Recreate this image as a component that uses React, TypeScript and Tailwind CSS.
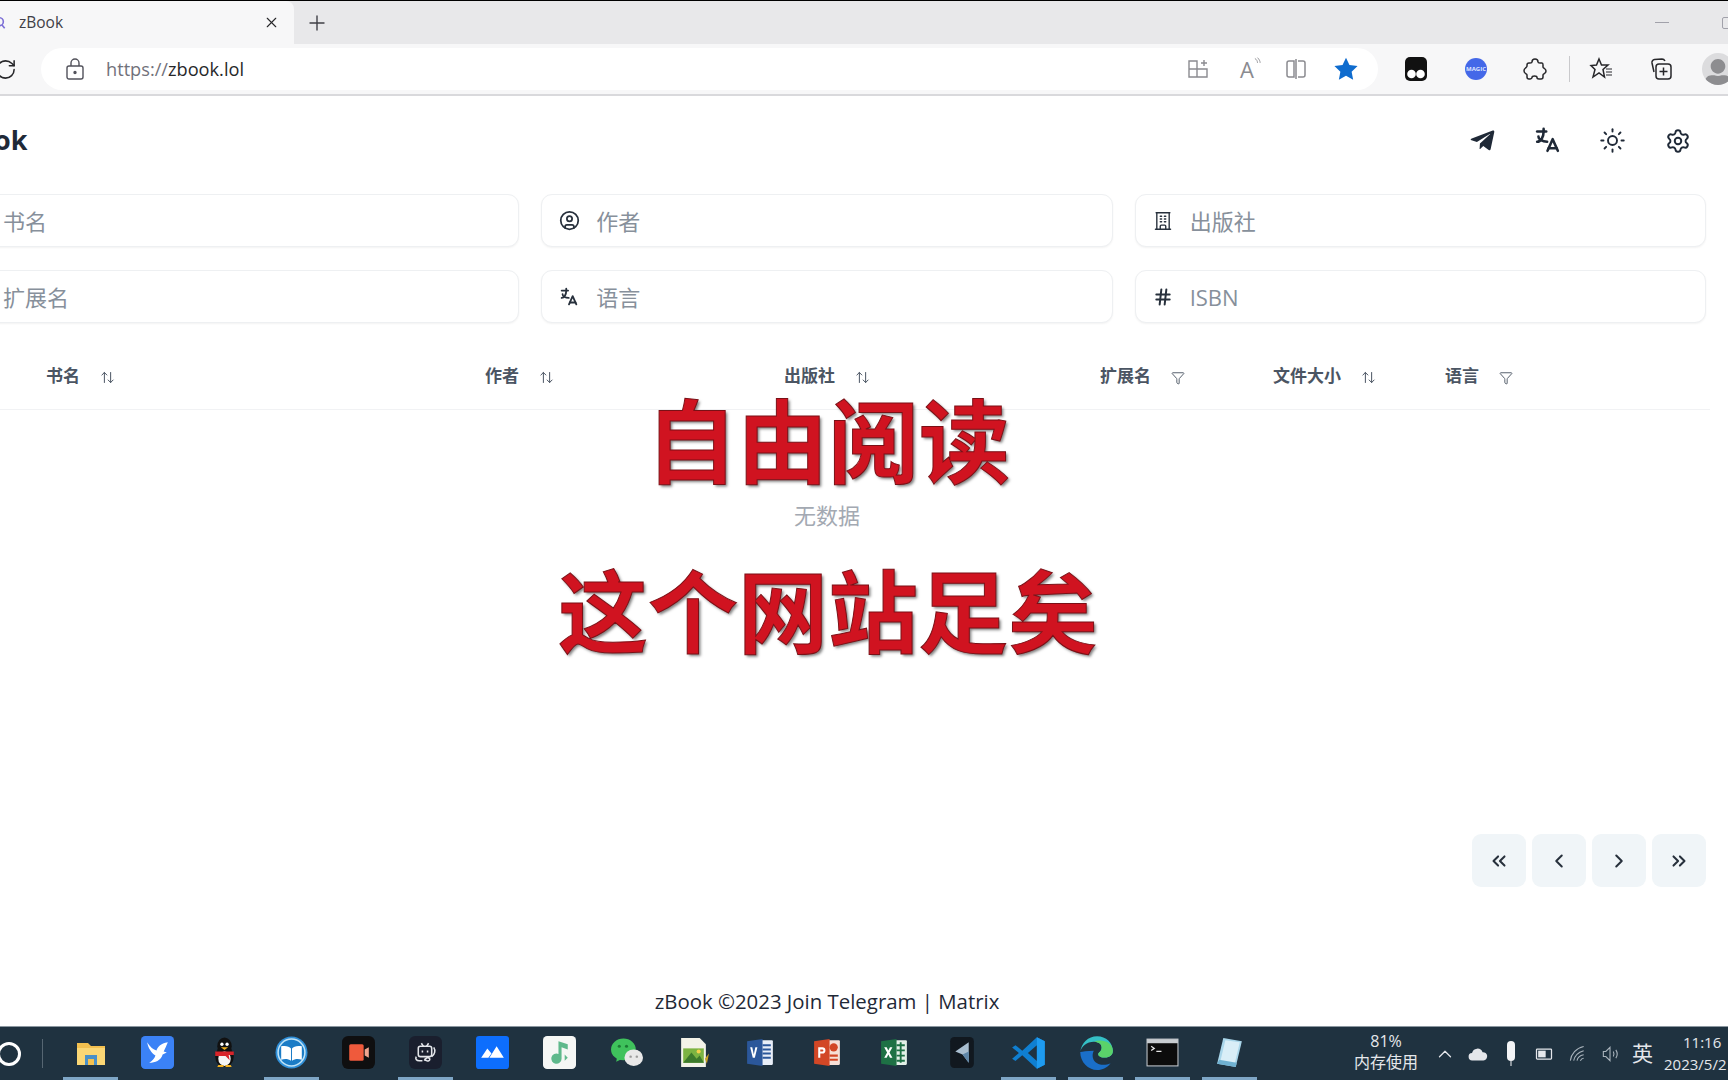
import type { ReactNode } from 'react';
import {
  ArrowUpDown,
  ChevronLeft,
  ChevronRight,
  ChevronUp,
  ChevronsLeft,
  ChevronsRight,
  CircleUser,
  Funnel,
  Hash,
  Plus,
  RotateCw,
  Settings,
  Sun,
  X,
} from 'lucide-react';
import { FaTelegramPlane, FaUserAlt } from 'react-icons/fa';
import { HiOutlineBuildingOffice } from 'react-icons/hi2';
import { TbLanguage } from 'react-icons/tb';

const searchFields: { label: string; icon: ReactNode }[] = [
  { label: '书名', icon: <span /> },
  { label: '作者', icon: <CircleUser className="w-[21px] h-[21px]" /> },
  { label: '出版社', icon: <HiOutlineBuildingOffice className="w-[22px] h-[22px]" /> },
  { label: '扩展名', icon: <span /> },
  { label: '语言', icon: <TbLanguage className="w-[24px] h-[24px]" /> },
  { label: 'ISBN', icon: <Hash className="w-[20px] h-[20px]" strokeWidth={2.4} /> },
];

const columns = [
  { label: '书名', filter: false, width: 'w-[439px]' },
  { label: '作者', filter: false, width: 'w-[299px]' },
  { label: '出版社', filter: false, width: 'w-[316px]' },
  { label: '扩展名', filter: true, width: 'w-[173px]' },
  { label: '文件大小', filter: false, width: 'w-[172px]' },
  { label: '语言', filter: true, width: 'w-[200px]' },
];

// taskbar app icons, drawn small so they read like the real ones
const taskbarApps: { key: string; active?: boolean; icon: ReactNode }[] = [
  {
    key: 'explorer',
    active: true,
    icon: (
      <svg viewBox="0 0 32 32" className="w-[32px] h-[32px]">
        <path d="M2 6h11l3 3h14v19H2z" fill="#f3c04f" />
        <path d="M2 11h28v17H2z" fill="#fbd775" />
        <path d="M10 18h12v10H10z" fill="#4a90c8" />
        <path d="M13 22h6v6h-6z" fill="#f3c04f" />
      </svg>
    ),
  },
  {
    key: 'bird',
    icon: (
      <svg viewBox="0 0 32 32" className="w-[33px] h-[33px]">
        <rect width="32" height="32" rx="4" fill="#3b82f6" />
        <path d="M6 6c3 5 6 7 9 8 1-3 4-7 11-8-2 5-3 7-4 9l3 1-4 2c-2 6-7 8-13 8 3-2 5-4 6-7C10 16 7 12 6 6z" fill="#fff" />
      </svg>
    ),
  },
  {
    key: 'qq',
    icon: (
      <svg viewBox="0 0 32 32" className="w-[33px] h-[33px]">
        <ellipse cx="16" cy="20" rx="9" ry="10" fill="#111" />
        <ellipse cx="16" cy="10" rx="7" ry="8.5" fill="#111" />
        <ellipse cx="16" cy="22" rx="6" ry="7" fill="#f5f5f5" />
        <circle cx="13.5" cy="8" r="1.6" fill="#fff" />
        <circle cx="18.5" cy="8" r="1.6" fill="#fff" />
        <path d="M12.5 11h7l-3.500 2.500z" fill="#f2b01e" />
        <path d="M7 15h18v3.500H20l1 5-4-4H7z" fill="#d8242a" />
        <path d="M9 30h6v-2H10zM17 28v2h6l-1-2z" fill="#f2b01e" />
      </svg>
    ),
  },
  {
    key: 'reader',
    active: true,
    icon: (
      <svg viewBox="0 0 32 32" className="w-[33px] h-[33px]">
        <circle cx="16" cy="16" r="15.500" fill="#2f8fd8" />
        <circle cx="16" cy="16" r="13" fill="#1b7cc6" stroke="#bfe3f7" strokeWidth="1.500" />
        <path d="M6 10c4-1 8 0 9.500 2v12C13 22 9 22 6 23zM26 10c-4-1-8 0-9.500 2v12c2.500-2 6.500-2 9.500-1z" fill="#fff" />
      </svg>
    ),
  },
  {
    key: 'recorder',
    icon: (
      <svg viewBox="0 0 32 32" className="w-[33px] h-[33px]">
        <rect width="32" height="32" rx="6" fill="#0f0f10" />
        <rect x="7" y="8" width="14" height="16" rx="1.500" fill="#ef5a3c" />
        <path d="M22 13l4-2v10l-4-2z" fill="#f0a58f" />
      </svg>
    ),
  },
  {
    key: 'robot',
    active: true,
    icon: (
      <svg viewBox="0 0 32 32" className="w-[33px] h-[33px]" fill="none" stroke="#e5e7eb" strokeWidth="1.500">
        <rect width="32" height="32" rx="6" fill="#1a1f2e" stroke="none" />
        <rect x="9" y="10" width="13" height="10" rx="2" />
        <path d="M12 7l2 3M19 7l-2 3M13 14v2M18 14v2M24 11c2 3 1 7-2 9M7 20c-1 2 0 4 3 4h3M15 22c2 4 6 2 5 0-1-2-4-1-5 2" />
      </svg>
    ),
  },
  {
    key: 'feishu',
    icon: (
      <svg viewBox="0 0 32 32" className="w-[33px] h-[33px]">
        <rect width="32" height="32" rx="3" fill="#0d6efd" />
        <path d="M5 21l6-9 4 5-3 4zM13 21l7-11 7 11z" fill="#fff" />
      </svg>
    ),
  },
  {
    key: 'music',
    icon: (
      <svg viewBox="0 0 32 32" className="w-[33px] h-[33px]">
        <rect width="32" height="32" rx="4" fill="#f5f7f5" />
        <path d="M15 5l9 3v5l-6-2v11a5 5 0 1 1-3-4.600z" fill="#5fb98c" />
        <path d="M21 18v6l3-3z" fill="#5fb98c" />
      </svg>
    ),
  },
  {
    key: 'wechat',
    icon: (
      <svg viewBox="0 0 32 32" className="w-[33px] h-[33px]">
        <ellipse cx="13" cy="13" rx="12" ry="10.500" fill="#3fc25c" />
        <path d="M7 20l-1 5 6-3z" fill="#3fc25c" />
        <ellipse cx="23" cy="21" rx="9" ry="8" fill="#e8e8e8" />
        <circle cx="20" cy="20" r="1.200" fill="#9a9a9a" />
        <circle cx="26" cy="20" r="1.200" fill="#9a9a9a" />
        <circle cx="9" cy="10" r="1.500" fill="#1c7a34" />
        <circle cx="16" cy="10" r="1.500" fill="#1c7a34" />
      </svg>
    ),
  },
  {
    key: 'photos',
    icon: (
      <svg viewBox="0 0 32 32" className="w-[33px] h-[33px]">
        <path d="M4 2h18l6 6v22H4z" fill="#f3f3e8" />
        <path d="M6 12h20v14H6z" fill="#7cb342" />
        <path d="M6 26l8-10 5 6 3-3 4 7z" fill="#3d7a2c" />
        <circle cx="21" cy="15" r="2" fill="#f2d04c" />
        <path d="M27 22l4-5-2 10z" fill="#c9a227" />
      </svg>
    ),
  },
  {
    key: 'word',
    icon: (
      <svg viewBox="0 0 32 32" className="w-[33px] h-[33px]">
        <rect x="12" y="4" width="16" height="24" rx="1" fill="#e8eef8" />
        <path d="M18 9h8M18 13h8M18 17h8M18 21h8" stroke="#2b579a" strokeWidth="2" />
        <path d="M3 5l15-2v26L3 27z" fill="#2b579a" />
        <path d="M6 11h2l1.500 7 1.500-7h2l-2.500 10h-2z" fill="#fff" />
      </svg>
    ),
  },
  {
    key: 'powerpoint',
    icon: (
      <svg viewBox="0 0 32 32" className="w-[33px] h-[33px]">
        <rect x="12" y="4" width="16" height="24" rx="1" fill="#f6dfd6" />
        <path d="M18 19h8M18 23h8" stroke="#d24726" strokeWidth="2" />
        <circle cx="22" cy="11" r="4" fill="#d24726" />
        <path d="M3 5l15-2v26L3 27z" fill="#d24726" />
        <path d="M7 11h4a3 3 0 0 1 0 6H9v4H7zM9 13v2h2a1 1 0 0 0 0-2z" fill="#fff" />
      </svg>
    ),
  },
  {
    key: 'excel',
    icon: (
      <svg viewBox="0 0 32 32" className="w-[33px] h-[33px]">
        <rect x="12" y="4" width="16" height="24" rx="1" fill="#e3f0e8" />
        <path d="M18 9h8M18 14h8M18 19h8M18 24h8M22 6v20" stroke="#1e7145" strokeWidth="1.800" />
        <path d="M3 5l15-2v26L3 27z" fill="#1e7145" />
        <path d="M6 11h2.400l1.600 3 1.600-3H14l-2.800 5 2.800 5h-2.400L10 18l-1.600 3H6l2.800-5z" fill="#fff" />
      </svg>
    ),
  },
  {
    key: 'typora',
    icon: (
      <svg viewBox="0 0 32 32" className="w-[33px] h-[33px]">
        <rect x="5" y="1" width="23" height="30" rx="4" fill="#11181f" />
        <path d="M23 6v20l-6-8-7-3z" fill="#a9bed0" />
        <path d="M23 26l-6-8 6-3z" fill="#5e86a8" />
      </svg>
    ),
  },
  {
    key: 'vscode',
    active: true,
    icon: (
      <svg viewBox="0 0 32 32" className="w-[36px] h-[36px]">
        <path d="M23 2l7 3.500v21L23 30 10 18l-6 5-3-2 6-5-6-5 3-2 6 5z" fill="#0f7fd1" />
        <path d="M23 9l-8 7 8 7z" fill="#1f3240" />
        <path d="M23 2l7 3.500v21L23 30z" fill="#1e9bf0" />
      </svg>
    ),
  },
  {
    key: 'edge',
    active: true,
    icon: (
      <svg viewBox="0 0 32 32" className="w-[36px] h-[36px]">
        <path d="M2 15C3 7 9 1 17 1c8 0 14 6 14 13 0 4-3 6-7 6-3 0-6-1-6-3 0-2 3-2 3-6 0-3-3-5-7-5-6 0-11 4-12 9z" fill="#35c0c6" />
        <path d="M2 15c0 9 7 16 15 16 5 0 9-2 12-6-4 2-9 2-12 0-4-2-5-7-3-11-6 0-10 1-12 1z" fill="#1a6fc9" />
        <path d="M31 14c0 4-3 6-7 6-3 0-6-1-6-3 0-2 3-2 3-6 0-3-3-5-7-5 8-3 17 1 17 8z" fill="#5ad26a" />
      </svg>
    ),
  },
  {
    key: 'terminal',
    active: true,
    icon: (
      <svg viewBox="0 0 32 32" className="w-[33px] h-[33px]">
        <rect x="1" y="3" width="30" height="26" fill="#0c0c0c" stroke="#c8ccd0" strokeWidth="1" />
        <rect x="1" y="3" width="30" height="4" fill="#c8ccd0" />
        <path d="M5 10l3 2-3 2M10 15h5" stroke="#e5e5e5" strokeWidth="1.200" fill="none" />
      </svg>
    ),
  },
  {
    key: 'notes',
    active: true,
    icon: (
      <svg viewBox="0 0 32 32" className="w-[33px] h-[33px]">
        <path d="M10 2l18 3-6 25-18-3z" fill="#a9d6ea" />
        <path d="M12 4l14 2-5 21-14-2z" fill="#d9eef7" />
        <path d="M4 27l18 3 1-4-17-3z" fill="#6fb1d1" />
      </svg>
    ),
  },
];

function TrayCell({ children }: { children: ReactNode }) {
  return <div className="w-[33px] shrink-0 flex items-center justify-center text-[#e5e7eb]">{children}</div>;
}

function BrowserChrome() {
  return (
    <>
      {/* Tab strip */}
      <div className="h-[44px] shrink-0 flex items-stretch bg-[#e8e8ea] border-t border-black">
        <div className="w-[294px] shrink-0 bg-[#f7f7f8] rounded-tr-lg flex items-center text-[#3f3f46]">
          <svg viewBox="0 0 12 20" className="w-[8px] h-[20px] -ml-[2px] shrink-0" fill="none" stroke="#7c6fd6" strokeWidth="2.400">
            <circle cx="2" cy="8" r="6" />
            <path d="M6 13l4 5" />
          </svg>
          <span className="ml-[13px] text-[15.5px]">zBook</span>
          <X className="w-[17px] h-[17px] ml-auto mr-[14px] text-[#27272a]" strokeWidth={1.6} />
        </div>
        <div className="ml-[11px] flex items-center text-[#3f3f46]">
          <Plus className="w-[24px] h-[24px]" strokeWidth={1.4} />
        </div>
        <div className="ml-auto flex items-center">
          <div className="w-[14px] h-px bg-[#a1a1aa] mr-[53px]" />
          <div className="w-[12px] h-[12px] border border-[#a1a1aa] rounded-[2px] -mr-[6px] shrink-0" />
        </div>
      </div>

      {/* Toolbar */}
      <div className="h-[52px] shrink-0 flex items-center bg-[#f7f7f8] border-b-2 border-[#d9d9dc]">
        <div className="w-[41px] shrink-0 flex items-center">
          <RotateCw className="w-[23px] h-[23px] -ml-[6px] text-[#27272a]" strokeWidth={1.6} />
        </div>
        <div className="w-[1337px] h-[42px] shrink-0 rounded-full bg-white flex items-center pl-[25px] pr-[19px] text-[#71717a]">
          <svg viewBox="0 0 18 22" className="w-[18px] h-[22px]" fill="none" stroke="#52525b" strokeWidth="1.400">
            <rect x="1" y="8" width="16" height="13" rx="2" />
            <path d="M5 8V5a4 4 0 0 1 8 0v3" />
            <circle cx="9" cy="14.500" r="1" fill="#52525b" />
          </svg>
          <span className="ml-[22px] mt-[2px] text-[18.2px] text-[#71717a]">
            https://<span className="text-[#27272a]">zbook.lol</span>
          </span>
          <div className="ml-auto flex items-center gap-[25px]">
            <svg viewBox="0 0 24 24" className="w-[24px] h-[24px]" fill="none" stroke="#8b8b90" strokeWidth="1.400">
              <path d="M3 4h8v16H3zM11 12h10v8H11zM3 12h8" />
              <path d="M18 3v6M15 6h6" />
            </svg>
            <div className="w-[24px] h-[24px] flex items-start justify-center relative">
              <span className="text-[22px] leading-[24px] text-[#8b8b90]">A</span>
              <svg viewBox="0 0 8 10" className="w-[7px] h-[10px] absolute right-[-2px] top-0" fill="none" stroke="#8b8b90" strokeWidth="1">
                <path d="M1 1c2 1 3 3 3 5M4 0c2 2 3 4 3 6" />
              </svg>
            </div>
            <svg viewBox="0 0 24 24" className="w-[24px] h-[24px]" fill="none" stroke="#8b8b90" strokeWidth="1.500">
              <path d="M10 4H5a2 2 0 0 0-2 2v12a2 2 0 0 0 2 2h5zM12 2v20M14 4h5a2 2 0 0 1 2 2v12a2 2 0 0 1-2 2h-5" />
            </svg>
            <svg viewBox="0 0 24 24" className="w-[26px] h-[26px]" fill="#0f6cce">
              <path d="M12 1.500l3.200 6.900 7.500.9-5.500 5.200 1.400 7.400L12 18.300l-6.600 3.600 1.400-7.400L1.300 9.300l7.500-.9z" />
            </svg>
          </div>
        </div>

        {/* Extensions */}
        <svg viewBox="0 0 24 24" className="ml-[26px] w-[24px] h-[24px] shrink-0">
          <rect x="1" y="0" width="22" height="24" rx="5" fill="#111" />
          <circle cx="7.500" cy="17" r="4.300" fill="#fff" />
          <circle cx="16.500" cy="17" r="4.300" fill="#fff" />
        </svg>
        <div className="ml-[37px] w-[22px] h-[22px] shrink-0 rounded-full bg-[#4468e8] flex items-center justify-center">
          <span className="text-[6px] font-bold text-[#dfe6ff] leading-none">MAGIC</span>
        </div>
        {/* Edge's rounded extensions puzzle piece */}
        <svg viewBox="0 0 24 24" className="ml-[36px] w-[24px] h-[24px] shrink-0" fill="none" stroke="#27272a" strokeWidth="1.500" strokeLinejoin="round">
          <path d="M9 5c0-4 6-4 6 0 0 1 1 1 2 1h2c1 0 1 1 1 2v2c0 1 1 1 1.500 1.500 2 1.500 2 3.500 0 5-.5.5-1.500.5-1.500 1.500v2c0 1-1 2-2 2h-2c-1 0-2-.5-2-1.500 0-2-5-2-5 0C9 21 8 22 7 22H6c-1 0-2-1-2-2v-2c0-1-1-1-1.500-1.500-2-1.500-2-4 0-5.500C3 10.500 4 10 4 9V8c0-1 1-2 2-2h1c1 0 2 0 2-1z" />
        </svg>
        <div className="ml-[22px] w-px h-[26px] shrink-0 bg-[#c9c9cc]" />
        <svg viewBox="0 0 24 24" className="ml-[19px] w-[24px] h-[24px] shrink-0" fill="none" stroke="#27272a" strokeWidth="1.500">
          <path d="M10 2l2.500 6H19l-5 4.500 1.500 7.500-5.500-4-6 4 2-7.500L2 8.500 7.500 8z" />
          <path d="M17 12h6M17 15h6M17 18h6" strokeWidth="1.200" />
        </svg>
        <svg viewBox="0 0 24 24" className="ml-[36px] w-[24px] h-[24px] shrink-0" fill="none" stroke="#27272a" strokeWidth="1.500">
          <path d="M5 15L3 6a3 3 0 0 1 2.500-3.500L13 2c1.500 0 2.500 1 3 2" />
          <rect x="7" y="7" width="15" height="15" rx="3" />
          <path d="M14.500 10.500v8M10.500 14.500h8" />
        </svg>
        <div className="ml-[29px] w-[32px] h-[32px] shrink-0 rounded-full bg-[#dcdcde] overflow-hidden flex items-end justify-center">
          <FaUserAlt className="w-[26px] h-[26px] text-[#8d8d90]" />
        </div>
      </div>
    </>
  );
}

function SearchInput({ label, icon }: { label: string; icon: ReactNode }) {
  return (
    <div className="h-[53px] rounded-[11px] border border-[#eef0f2] bg-white shadow-[0_1px_2px_rgba(0,0,0,0.05)] flex items-center pl-[16px]">
      <div className="w-[22px] shrink-0 flex items-center justify-center text-[#27303c]">{icon}</div>
      <input
        placeholder={label}
        className="ml-[16px] mt-[2px] flex-1 min-w-0 bg-transparent outline-none text-[22px] placeholder:text-[#87909b]"
      />
    </div>
  );
}

function Taskbar() {
  return (
    <div className="h-[54px] shrink-0 flex items-stretch bg-[#1f3240] border-t border-[#8b97a0]">
      <div className="w-[43px] shrink-0 relative flex items-center">
        <div className="w-[24px] h-[24px] -ml-[3px] rounded-full border-[3px] border-white" />
        <div className="absolute right-0 top-[12px] bottom-[12px] w-px bg-[#566672]" />
      </div>
      <div className="w-[14px] shrink-0" />
      {taskbarApps.map((app) => (
        <div key={app.key} className="w-[67px] shrink-0 relative flex items-center justify-center pb-[2px]">
          {app.icon}
          {app.active && <div className="absolute left-[6px] right-[6px] bottom-0 h-[3px] bg-[#7ea6c6]" />}
        </div>
      ))}
      <div className="w-[81px] shrink-0" />

      <div className="w-[84px] shrink-0 flex flex-col items-center justify-center pb-[3px] text-[16px] leading-[21px] text-[#e5e7eb]">
        <span>81%</span>
        <span>内存使用</span>
      </div>
      <TrayCell>
        <ChevronUp className="w-[22px] h-[22px]" strokeWidth={1.4} />
      </TrayCell>
      <TrayCell>
        <svg viewBox="0 0 24 24" className="w-[22px] h-[22px]" fill="#e5e7eb">
          <path d="M6 19a4 4 0 0 1-.5-8A6 6 0 0 1 17 10a4.500 4.500 0 0 1 1 9z" />
        </svg>
      </TrayCell>
      <TrayCell>
        <svg viewBox="0 0 12 28" className="w-[12px] h-[28px]" fill="#f3f4f6">
          <rect x="2" y="1" width="8" height="20" rx="4" />
          <path d="M5.500 21h1v5h-1z" />
        </svg>
      </TrayCell>
      <TrayCell>
        <svg viewBox="0 0 24 24" className="w-[20px] h-[20px]" fill="none" stroke="#e5e7eb" strokeWidth="1.500">
          <rect x="3" y="6" width="18" height="12" rx="1" />
          <rect x="5" y="8" width="9" height="8" fill="#e5e7eb" stroke="none" />
        </svg>
      </TrayCell>
      <TrayCell>
        <svg viewBox="0 0 24 24" className="w-[20px] h-[20px]" fill="none" stroke="#aab4bc" strokeWidth="1.300">
          <path d="M4 20C5 12 11 5 20 3M8 20c1-5 5-10 12-12M12 20c.5-3 3-6 8-7M16 20c.5-1 2-3 4-3" />
        </svg>
      </TrayCell>
      <TrayCell>
        <svg viewBox="0 0 24 24" className="w-[20px] h-[20px]" fill="none" stroke="#aab4bc" strokeWidth="1.300">
          <path d="M4 9v6h3l5 5V4L7 9zM16 9c1 2 1 4 0 6M19 7c2 3 2 7 0 10" />
        </svg>
      </TrayCell>
      <TrayCell>
        <span className="text-[21px]">英</span>
      </TrayCell>
      <div className="w-[70px] shrink-0 ml-[5px] flex flex-col justify-center pb-[2px] text-[15px] leading-[22px] text-[#e5e7eb] whitespace-nowrap">
        <span className="ml-[19px]">11:16</span>
        <span>2023/5/2</span>
      </div>
    </div>
  );
}

export default function App() {
  return (
    <div className="relative w-[1728px] h-[1080px] overflow-hidden flex flex-col bg-white font-['Open_Sans','Noto_Sans_CJK_SC',sans-serif]">
      <BrowserChrome />

      {/* zBook page, scrolled a bit to the left in the recording */}
      <div className="flex-1 min-h-0 w-[1758px] -ml-[52px] flex flex-col">
        <header className="h-[98px] shrink-0 pb-[9px] flex items-center justify-between">
          <span className="-ml-[2px] text-[27px] font-bold text-[#1f2937]">zBook</span>
          <div className="flex items-center text-[#1f2937] mr-[-1px]">
            <div className="w-[59px] h-[59px] flex items-center justify-center">
              <FaTelegramPlane className="w-[27px] h-[27px]" />
            </div>
            <div className="w-[59px] h-[59px] ml-[6px] flex items-center justify-center">
              <TbLanguage className="w-[31px] h-[31px]" />
            </div>
            <div className="w-[59px] h-[59px] ml-[6px] flex items-center justify-center">
              <Sun className="w-[27px] h-[27px]" strokeWidth={1.7} />
            </div>
            <div className="w-[59px] h-[59px] ml-[6px] flex items-center justify-center">
              <Settings className="w-[26px] h-[26px]" strokeWidth={1.8} />
            </div>
          </div>
        </header>

        <div className="grid grid-cols-3 gap-x-[22px] gap-y-[23px] shrink-0">
          {searchFields.map((field) => (
            <SearchInput key={field.label} label={field.label} icon={field.icon} />
          ))}
        </div>

        <div className="mt-[27px] h-[60px] shrink-0 flex items-center pb-[8px] pl-[98px] mr-[-4px] border-b border-[#f1f2f4] text-[#4b5563]">
          {columns.map((col) => (
            <div key={col.label} className={`${col.width} shrink-0 flex items-center`}>
              <span className="text-[17px] font-bold">{col.label}</span>
              {col.filter ? (
                <Funnel className="ml-[20px] mt-[4px] w-[14px] h-[14px]" strokeWidth={1.6} />
              ) : (
                <ArrowUpDown className="ml-[20px] mt-[4px] w-[15px] h-[15px]" strokeWidth={1.6} />
              )}
            </div>
          ))}
        </div>

        <div className="h-[210px] shrink-0 flex items-center justify-center text-[22px] text-[#a3a9b2]">无数据</div>

        <div className="mt-[214px] shrink-0 flex justify-end gap-[6px]">
          {[ChevronsLeft, ChevronLeft, ChevronRight, ChevronsRight].map((Icon, i) => (
            <button key={i} className="w-[54px] h-[53px] rounded-[9px] bg-[#f0f5f8] flex items-center justify-center text-[#27303c]">
              <Icon className="w-[22px] h-[22px]" strokeWidth={2.2} />
            </button>
          ))}
        </div>

        <footer className="pt-[99px] text-center text-[20.4px] leading-[30px] text-[#1f2937]">
          zBook ©2023 Join Telegram | Matrix
        </footer>
      </div>

      <Taskbar />

      {/* Video caption burnt over the page */}
      <div className="absolute left-[528px] top-[379px] w-[600px] flex flex-col items-center font-['Noto_Sans_CJK_SC',sans-serif] font-bold text-[#d01320] [-webkit-text-stroke:1px_#7a1016] [text-shadow:2px_2px_3px_rgba(0,0,0,0.5)]">
        <div className="text-[91px] leading-[114px]">自由阅读</div>
        <div className="mt-[57px] ml-[0px] text-[90px] leading-[114px]">这个网站足矣</div>
      </div>
    </div>
  );
}
